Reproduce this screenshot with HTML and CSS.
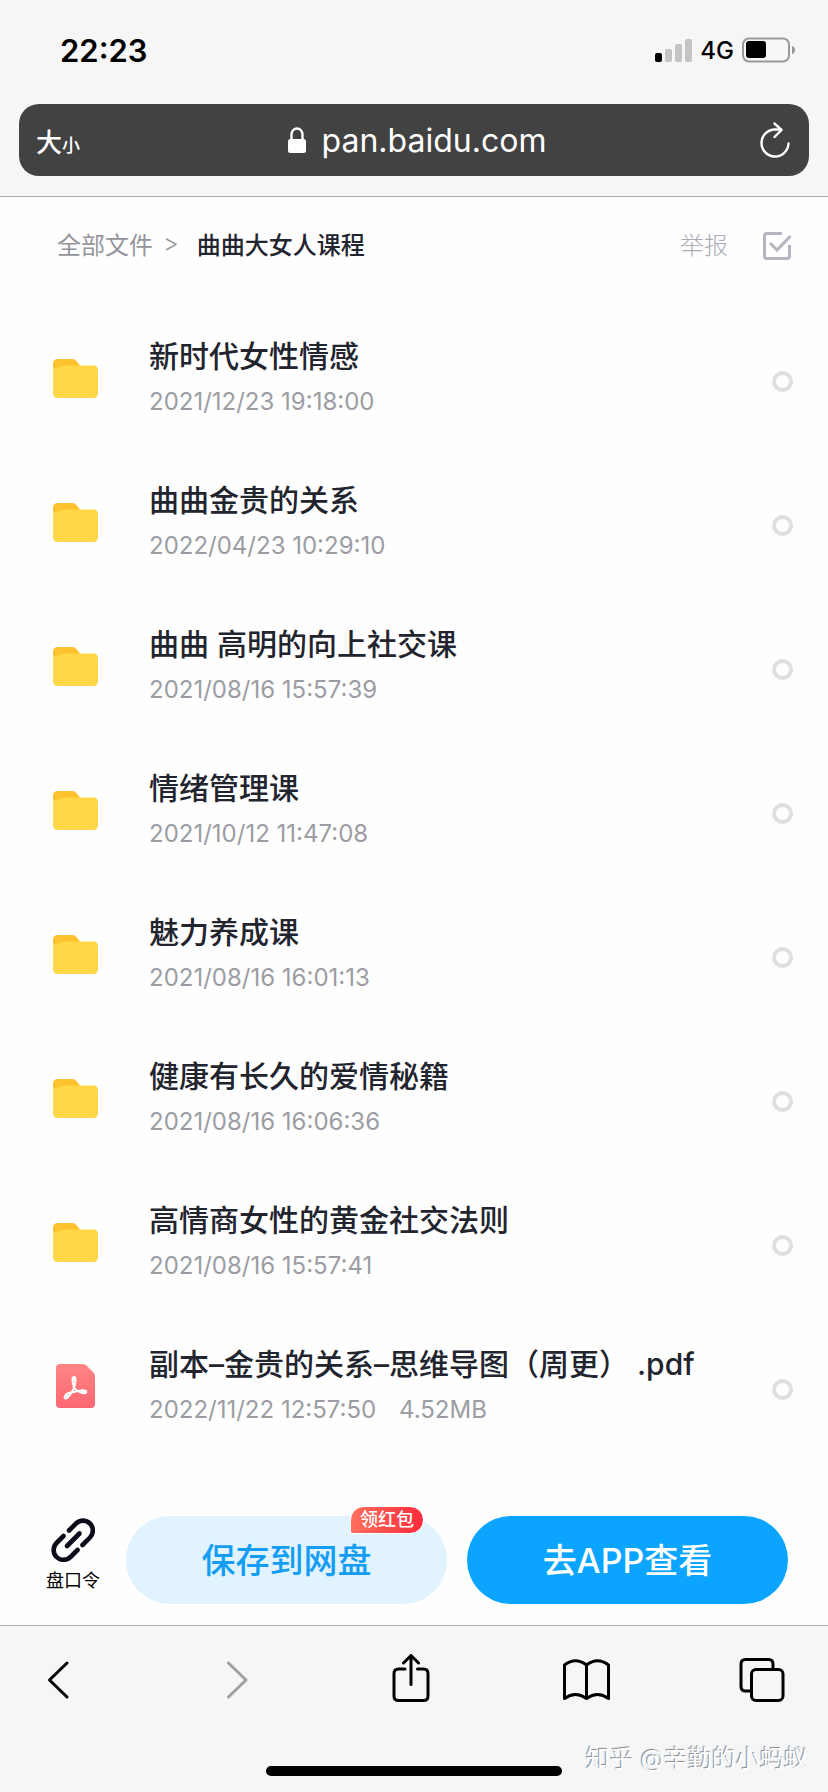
FILE: index.html
```html
<!DOCTYPE html>
<html lang="zh-CN">
<head>
  <meta charset="UTF-8" />
  <meta name="viewport" content="width=device-width, initial-scale=1.0"/>
  <title>曲曲大女人课程</title>
  <link rel="stylesheet" href="styles.css">
</head>
<body>
  <svg class="sprite" aria-hidden="true">
    <symbol id="folder" viewBox="0 0 45 39">
      <path fill="#fdc22d" d="M5 0h14c2 0 3.300.7 4.700 2.200L29 9v13H0V5q0-5 5-5z"/>
      <path fill="#ffd747" d="M0 11q0-2 3-2 1.500 0 3-1 1.500-1.500 4-1.500H40q5 0 5 5V34q0 5-5 5H5q-5 0-5-5z"/>
    </symbol>
  </svg>

  <header class="top">
    <div class="status">
      <span class="time">22:23</span>
      <div class="signal">
        <svg width="37" height="23" viewBox="0 0 37 23">
          <rect x="0" y="14" width="7" height="9" rx="2"/>
          <g fill="#c4c4c4">
            <rect x="10" y="10" width="7" height="13" rx="2"/>
            <rect x="20" y="5" width="7" height="18" rx="2"/>
            <rect x="30" y="0" width="7" height="23" rx="2"/>
          </g>
        </svg>
        <span class="network">4G</span>
        <svg width="54" height="26" viewBox="0 0 54 26">
          <rect x="1" y="1.500" width="46" height="23" rx="6" fill="none" stroke="#999" stroke-width="2"/>
          <rect x="4" y="4" width="20" height="17" rx="3"/>
          <path fill="#999" d="M50 9q3 1 3 4t-3 4z"/>
        </svg>
      </div>
    </div>
    <div class="address">
      <button class="text-size" type="button">大<small>小</small></button>
      <a class="url" href="#">
        <svg width="18" height="27" viewBox="0 0 18 27">
          <rect y="12" width="18" height="14" rx="2.500" fill="#fff"/>
          <path d="M3.500 13V7.500a5.500 6 0 0 1 11 0V13" fill="none" stroke="#fff" stroke-width="2.400"/>
        </svg>
        pan.baidu.com
      </a>
      <button class="reload" type="button" aria-label="刷新">
        <svg width="30" height="36" viewBox="0 0 30 36" fill="none" stroke="#fff" stroke-width="2.400" stroke-linecap="round" stroke-linejoin="round">
          <path d="M28.500 21.500A13.500 13.500 0 1 1 15 7.500h6"/>
          <path d="M14.500 1.500l7 6.500-7 7"/>
        </svg>
      </button>
    </div>
  </header>

  <nav class="crumbs">
    <a href="#">全部文件</a>
    <span class="sep">&gt;</span>
    <strong>曲曲大女人课程</strong>
    <a class="report" href="#">举报</a>
    <button type="button" aria-label="全选">
      <svg width="30" height="30" viewBox="0 0 30 30" fill="none" stroke="#b3b6c0" stroke-width="3">
        <path d="M20 2.500H5Q2.500 2.500 2.500 5V25Q2.500 27.500 5 27.500H25Q27.500 27.500 27.500 25V14"/>
        <path d="M8 12l7 7L28.500 5"/>
      </svg>
    </button>
  </nav>

  <main class="files">
    <label class="file">
      <svg class="icon" width="45" height="39"><use href="#folder"/></svg>
      <span class="info"><b>新时代女性情感</b><span class="date">2021/12/23 19:18:00</span></span>
      <input type="checkbox">
    </label>
    <label class="file">
      <svg class="icon" width="45" height="39"><use href="#folder"/></svg>
      <span class="info"><b>曲曲金贵的关系</b><span class="date">2022/04/23 10:29:10</span></span>
      <input type="checkbox">
    </label>
    <label class="file">
      <svg class="icon" width="45" height="39"><use href="#folder"/></svg>
      <span class="info"><b>曲曲 高明的向上社交课</b><span class="date">2021/08/16 15:57:39</span></span>
      <input type="checkbox">
    </label>
    <label class="file">
      <svg class="icon" width="45" height="39"><use href="#folder"/></svg>
      <span class="info"><b>情绪管理课</b><span class="date">2021/10/12 11:47:08</span></span>
      <input type="checkbox">
    </label>
    <label class="file">
      <svg class="icon" width="45" height="39"><use href="#folder"/></svg>
      <span class="info"><b>魅力养成课</b><span class="date">2021/08/16 16:01:13</span></span>
      <input type="checkbox">
    </label>
    <label class="file">
      <svg class="icon" width="45" height="39"><use href="#folder"/></svg>
      <span class="info"><b>健康有长久的爱情秘籍</b><span class="date">2021/08/16 16:06:36</span></span>
      <input type="checkbox">
    </label>
    <label class="file">
      <svg class="icon" width="45" height="39"><use href="#folder"/></svg>
      <span class="info"><b>高情商女性的黄金社交法则</b><span class="date">2021/08/16 15:57:41</span></span>
      <input type="checkbox">
    </label>
    <label class="file">
      <svg class="icon" width="45" height="44" viewBox="0 0 45 44">
        <defs>
          <linearGradient id="red" x1="0" y1="0" x2="0" y2="1">
            <stop offset="0" stop-color="#ff8583"/>
            <stop offset="1" stop-color="#fb6772"/>
          </linearGradient>
        </defs>
        <path fill="url(#red)" d="M7 0H30q2 0 3.500 1.500l7 7Q42 10 42 12V40q0 4-4 4H7q-4 0-4-4V4q0-4 4-4z"/>
        <g fill="none" stroke="#fff" stroke-width="2" stroke-linejoin="round">
          <path d="M21 24Q18 13 21 13t0 11Q16 34 13 34.500c-3 0-1-4 2.500-5.500L28 26.500c4-.5 6 .5 5 2-2 2-9-1-12-4.500z"/>
          <path stroke-width="3" d="M21 14v3M13.500 33.500l2-2M29 27.500h3"/>
        </g>
      </svg>
      <span class="info"><b>副本–金贵的关系–思维导图（周更） .pdf</b><span class="date">2022/11/22 12:57:50 <span class="size">4.52MB</span></span></span>
      <input type="checkbox">
    </label>
  </main>

  <div class="actions">
    <button class="code" type="button">
      <svg width="44" height="44" viewBox="0 0 44 44" fill="none" stroke="#0b0b1c" stroke-width="4.600" stroke-linecap="round">
        <path d="M18 12.500l7-7a10 10 0 0 1 14 0 10 10 0 0 1 0 14l-7.500 7.500"/>
        <path d="M12.500 18l-7 7a10 10 0 0 0 0 14 10 10 0 0 0 14 0l7-7"/>
        <path d="M16 28l12.500-12.500"/>
      </svg>
      盘口令
    </button>
    <button class="save" type="button">保存到网盘<span class="badge">领红包</span></button>
    <button class="open" type="button">去APP查看</button>
  </div>

  <footer class="bottom">
    <div class="toolbar">
      <button type="button" aria-label="后退">
        <svg viewBox="0 0 48 48"><path d="M33 9L15.500 26 33 43"/></svg>
      </button>
      <button type="button" aria-label="前进" disabled>
        <svg viewBox="0 0 48 48"><path d="M18.500 9L36 26 18.500 43"/></svg>
      </button>
      <button type="button" aria-label="分享">
        <svg viewBox="0 0 48 48"><path d="M19 15H12.500Q8 15 8 19.500V42q0 4.500 4.500 4.500H37.500q4.500 0 4.500-4.500V19.500Q42 15 37.500 15H31.500M25 30.500V2M17.500 9l7.500-7.500L32.500 9"/></svg>
      </button>
      <button type="button" aria-label="书签">
        <svg viewBox="0 0 48 48"><path d="M24.500 11Q13.500 2.500 2.500 11V44.500Q13.500 36.500 24.500 44.500 35.500 36.500 46.500 44.500V11Q35.500 2.500 24.500 11V44"/></svg>
      </button>
      <button type="button" aria-label="标签页">
        <svg viewBox="0 0 48 48"><path d="M12 37H7.500Q3 37 3 32.500V10Q3 5.500 7.500 5.500H30.500Q35 5.500 35 10v5"/><rect x="13.500" y="15.500" width="31.500" height="31" rx="4.500"/></svg>
      </button>
    </div>
    <div class="home"></div>
    <span class="watermark">知乎 @辛勤的小蚂蚁</span>
  </footer>
</body>
</html>
```

FILE: styles.css
```css
* { box-sizing: border-box; }
body {
  margin: 0;
  min-height: 100vh;
  display: flex;
  flex-direction: column;
  background: #fefefe;
  color: #22242e;
  font-family: Inter, "Noto Sans CJK SC", sans-serif;
}
button {
  padding: 0;
  border: none;
  background: none;
  color: inherit;
  font-family: inherit;
  cursor: pointer;
}
a { color: inherit; text-decoration: none; }
svg { display: block; flex: none; }
.sprite { position: absolute; width: 0; height: 0; }

.top {
  background: #f6f6f6;
  border-bottom: 1px solid #aaa;
  padding: 0 19px 20px;
}
.status {
  height: 104px;
  padding: 0 13px 4px 41px;
  display: flex;
  align-items: center;
  justify-content: space-between;
  color: #000;
}
.time { font-size: 31px; font-weight: 600; }
.signal { display: flex; align-items: center; gap: 8px; }
.network { font-size: 24px; font-weight: 500; }
.address {
  height: 72px;
  padding: 0 19px 0 17px;
  border-radius: 20px;
  background: #424242;
  color: #fff;
  display: grid;
  grid-template-columns: 1fr auto 1fr;
  align-items: center;
}
.text-size { justify-self: start; font-size: 26px; font-weight: 500; }
.text-size small { font-size: 18px; }
.url {
  margin-left: 8px;
  display: flex;
  align-items: center;
  gap: 16px;
  font-size: 32px;
}
.reload { justify-self: end; }

.crumbs {
  height: 94px;
  padding: 0 36px 2px 57px;
  display: flex;
  align-items: center;
  font-size: 24px;
  color: #94959b;
}
.crumbs strong { font-weight: 500; color: #22242e; }
.crumbs .sep { margin: 0 18px 0 10px; font-weight: 300; }
.crumbs .report { margin-left: auto; margin-right: 34px; font-weight: 300; color: #a9acb8; }
.crumbs button { margin-top: 5px; }

.files { flex: 1; padding-top: 15px; }
.file {
  height: 144px;
  padding: 0 35px 0 53px;
  display: flex;
  align-items: center;
}
.info { flex: 1; margin: 0 0 2px 51px; display: flex; flex-direction: column; gap: 8px; }
.info b { font-size: 30px; line-height: 42px; font-weight: 500; }
.date { font-size: 24px; line-height: 34px; color: #9c9da3; }
.size { margin-left: 16px; }
.file input {
  appearance: none;
  width: 21px;
  height: 21px;
  margin: 6px 0 0;
  border: 4px solid #e0e0e0;
  border-radius: 50%;
}
.file input:checked { background: #06a7ff; }

.actions {
  padding: 0 40px 21px 46px;
  display: flex;
  align-items: center;
}
.code {
  width: 54px;
  margin-right: 26px;
  padding-bottom: 8px;
  display: flex;
  flex-direction: column;
  align-items: center;
  gap: 6px;
  font-size: 18px;
  line-height: 26px;
  color: #000;
  white-space: nowrap;
}
.save, .open {
  flex: 1;
  height: 88px;
  padding-bottom: 4px;
  border-radius: 44px;
  font-size: 34px;
  font-weight: 500;
}
.save { position: relative; margin-right: 20px; background: #e0f3ff; color: #149df5; }
.open { background: #0ba5ff; color: #fff; }
.badge {
  position: absolute;
  top: -10px;
  right: 23px;
  padding: 0 9px;
  border: 1px solid #fff;
  border-radius: 14px 14px 14px 2px;
  background: linear-gradient(90deg, #ff6f5c, #ff2b3b);
  color: #fff;
  font-size: 18px;
  line-height: 26px;
}

.bottom {
  position: relative;
  height: 167px;
  border-top: 1px solid #aaa;
  background: #f6f6f6;
}
.toolbar {
  padding: 28px 42px 0 34px;
  display: flex;
  justify-content: space-between;
}
.toolbar svg {
  width: 48px;
  height: 48px;
  fill: none;
  stroke: #000;
  stroke-width: 3;
  stroke-linecap: round;
  stroke-linejoin: round;
}
.toolbar button:disabled svg { stroke: #a0a0a0; }
.home {
  width: 296px;
  height: 10px;
  margin: 64px auto 0;
  border-radius: 5px;
  background: #000;
}
.watermark {
  position: absolute;
  right: 20px;
  bottom: 15px;
  font-size: 24px;
  line-height: 36px;
  color: #fff;
  text-shadow: -1px -1px 1px #888;
}
```
